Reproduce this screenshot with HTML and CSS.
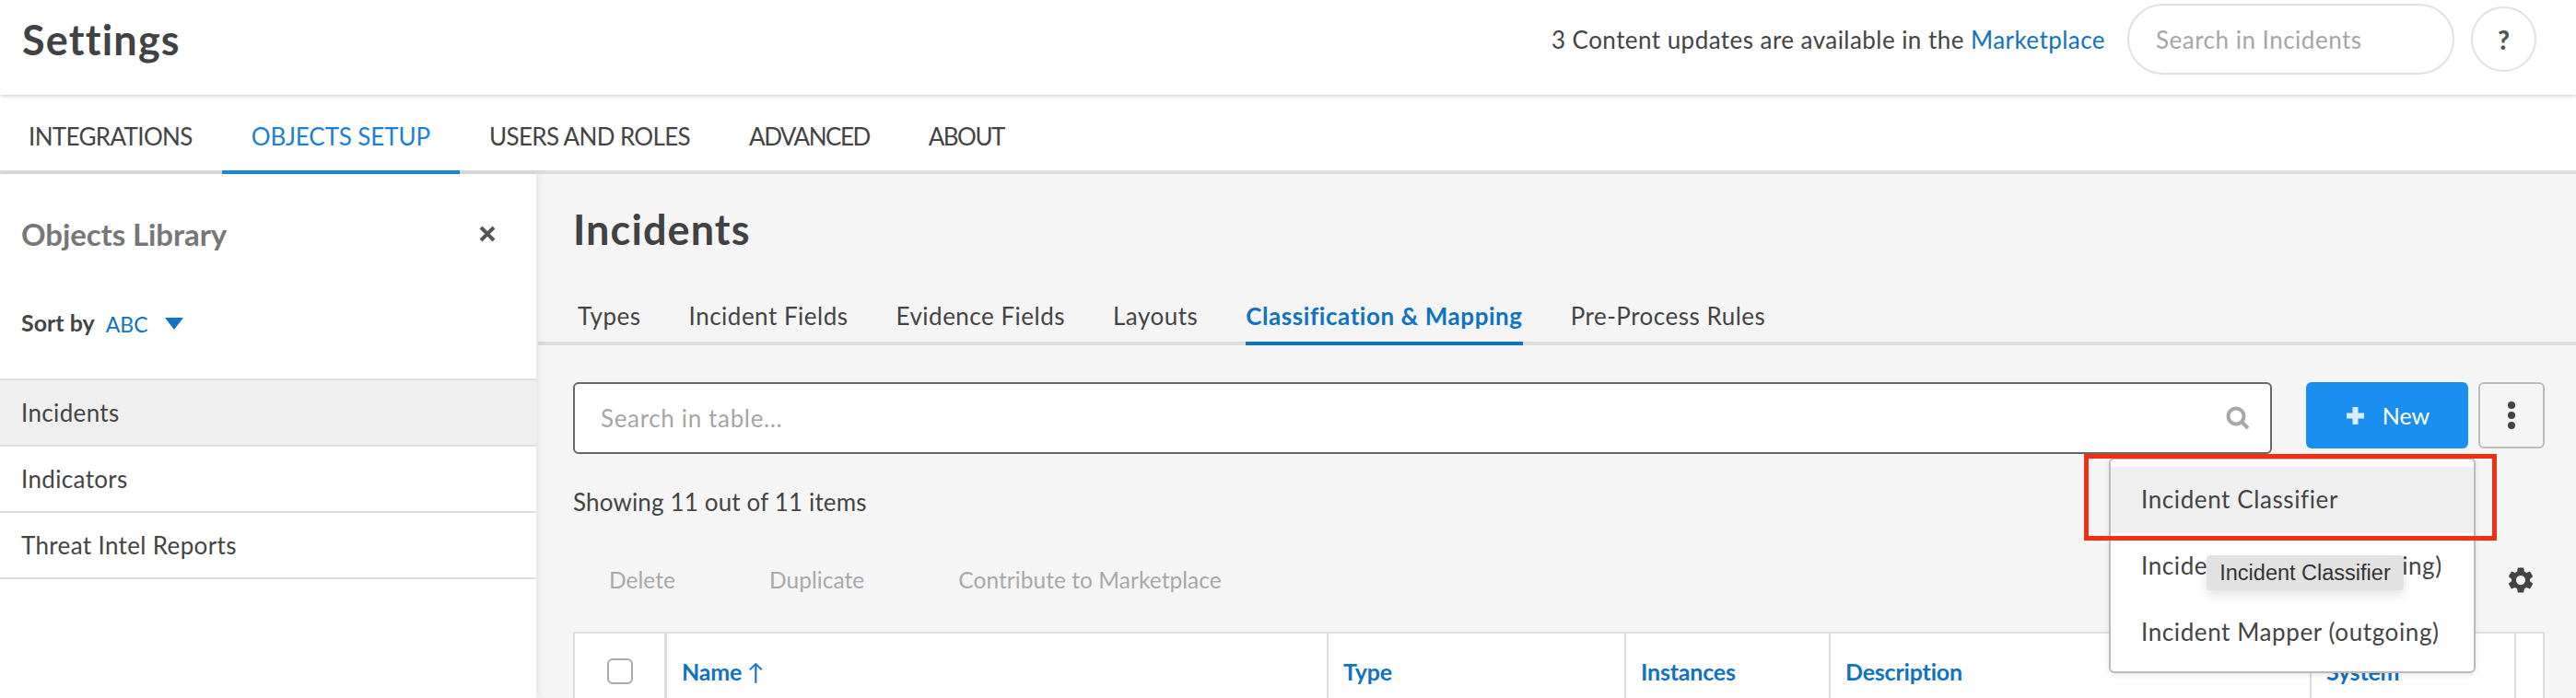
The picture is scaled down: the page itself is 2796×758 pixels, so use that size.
FILE: index.html
```html
<!DOCTYPE html>
<html lang="en">
<head>
<meta charset="utf-8">
<title>Settings</title>
<link rel="stylesheet" href="styles.css">
</head>
<body>
<div class="app">
  <header class="topbar">
    <h1 class="page-title">Settings</h1>
    <div class="updates">3 Content updates are available in the <a class="link">Marketplace</a></div>
    <div class="pill-search">Search in Incidents</div>
    <div class="help">?</div>
  </header>
  <nav class="navtabs">
    <div class="navtab">INTEGRATIONS</div>
    <div class="navtab navtab-active">OBJECTS SETUP</div>
    <div class="navtab">USERS AND ROLES</div>
    <div class="navtab navtab-tight">ADVANCED</div>
    <div class="navtab navtab-tight">ABOUT</div>
  </nav>
  <div class="content">
    <aside class="sidebar">
      <div class="side-head">
        <div class="side-title">Objects Library</div>
        <svg class="side-close" viewBox="0 0 18 18"><path d="M2 2 16 16M16 2 2 16"/></svg>
      </div>
      <div class="sort">
        <span class="sort-label">Sort by</span>
        <span class="sort-value">ABC</span>
        <svg class="sort-caret" viewBox="0 0 20 13"><path d="M0 0H20L10 13Z"/></svg>
      </div>
      <ul class="side-list">
        <li class="side-item side-item-active">Incidents</li>
        <li class="side-item">Indicators</li>
        <li class="side-item">Threat Intel Reports</li>
      </ul>
    </aside>
    <main class="main">
      <h2 class="main-title">Incidents</h2>
      <div class="subtabs">
        <div class="subtab">Types</div>
        <div class="subtab">Incident Fields</div>
        <div class="subtab">Evidence Fields</div>
        <div class="subtab">Layouts</div>
        <div class="subtab subtab-active">Classification &amp; Mapping</div>
        <div class="subtab">Pre-Process Rules</div>
      </div>
      <div class="toolbar">
        <div class="table-search">
          <span class="table-search-text">Search in table...</span>
          <svg class="search-icon" viewBox="0 0 26 26"><circle cx="11" cy="11" r="8.5"/><path d="M17.5 17.5 24 24"/></svg>
        </div>
        <div class="btn-new">
          <svg class="plus-icon" viewBox="0 0 23 23"><path d="M11.5 2V21M2 11.5H21"/></svg>
          <span>New</span>
        </div>
        <div class="btn-more"><i class="dot"></i><i class="dot"></i><i class="dot"></i></div>
      </div>
      <div class="count">Showing 11 out of 11 items</div>
      <div class="actions">
        <span class="action">Delete</span>
        <span class="action">Duplicate</span>
        <span class="action">Contribute to Marketplace</span>
        <svg class="gear" viewBox="2.2 2 19.6 20"><path d="M19.14 12.94c.04-.3.06-.61.06-.94 0-.32-.02-.64-.07-.94l2.03-1.58a.49.49 0 0 0 .12-.61l-1.92-3.32a.488.488 0 0 0-.59-.22l-2.39.96c-.5-.38-1.03-.7-1.62-.94l-.36-2.54a.484.484 0 0 0-.48-.41h-3.84c-.24 0-.43.17-.47.41l-.36 2.54c-.59.24-1.13.57-1.62.94l-2.39-.96c-.22-.08-.47 0-.59.22L2.74 8.87c-.12.21-.08.47.12.61l2.03 1.58c-.05.3-.09.63-.09.94s.02.64.07.94l-2.03 1.58a.49.49 0 0 0-.12.61l1.92 3.32c.12.22.37.29.59.22l2.39-.96c.5.38 1.03.7 1.62.94l.36 2.54c.05.24.24.41.48.41h3.84c.24 0 .44-.17.47-.41l.36-2.54c.59-.24 1.13-.56 1.62-.94l2.39.96c.22.08.47 0 .59-.22l1.92-3.32c.12-.22.07-.47-.12-.61l-2.01-1.58zM12 15.6c-1.98 0-3.6-1.62-3.6-3.6s1.62-3.6 3.6-3.6 3.6 1.62 3.6 3.6-1.62 3.6-3.6 3.6z"/></svg>
      </div>
      <div class="table">
        <div class="th th-check"><span class="checkbox"></span></div>
        <div class="th">Name <span class="arrow">↑</span></div>
        <div class="th">Type</div>
        <div class="th">Instances</div>
        <div class="th">Description</div>
        <div class="th">System</div>
        <div class="th"></div>
      </div>
    </main>
  </div>
  <div class="menu">
    <div class="menu-item menu-item-hover">Incident Classifier</div>
    <div class="menu-item">Incident Mapper (incoming)</div>
    <div class="menu-item">Incident Mapper (outgoing)</div>
  </div>
  <div class="tooltip">Incident Classifier</div>
  <div class="annotation"></div>
</div>
</body>
</html>
```
FILE: styles.css
```css
* { box-sizing: border-box; }
html, body { margin: 0; padding: 0; background: #fff; }
body { font-family: "Lato", "Noto Sans", sans-serif; color: #444; }
.app { position: relative; width: 2796px; height: 758px; overflow: hidden; display: flex; flex-direction: column; }

.topbar { height: 103px; flex: none; display: flex; align-items: center; padding: 0 43px 18px 24px; background: #fff; box-shadow: 0 1px 4px rgba(0,0,0,.22); position: relative; z-index: 2; }
.page-title { flex: 1; margin: 0; font-size: 45px; font-weight: 700; color: #404243; letter-spacing: 1.2px; }
.updates { font-size: 26px; color: #444; margin-right: 24px; letter-spacing: .45px; }
.link { color: #0f72c2; }
.pill-search { width: 355px; height: 77px; border: 2px solid #e0e0e0; border-radius: 39px; padding-left: 29px; display: flex; align-items: center; font-size: 26px; color: #a6a6a6; letter-spacing: .5px; }
.help { width: 71px; height: 71px; margin-left: 18px; border: 2px solid #e0e0e0; border-radius: 50%; display: flex; align-items: center; justify-content: center; font-size: 28px; font-weight: 900; color: #555; }

.navtabs { height: 86px; flex: none; display: flex; padding-top: 3px; border-bottom: 4px solid #dcdcdc; background: #fff; }
.navtab { padding: 0 32px; height: 83px; display: flex; align-items: center; font-size: 26px; color: #444; letter-spacing: -.65px; }
.navtab:first-child { margin-left: -1px; }
.navtab-tight { letter-spacing: -1.5px; }
.navtab-active { color: #1a80d4; border-bottom: 4px solid #1c88dc; padding-top: 4px; letter-spacing: -.1px; }

.content { flex: 1; display: flex; min-height: 0; }
.sidebar { width: 582px; flex: none; background: #fff; box-shadow: 3px 0 8px rgba(0,0,0,.07); position: relative; }
.side-head { display: flex; align-items: center; justify-content: space-between; padding: 45px 44px 0 23px; }
.side-title { font-size: 33px; font-weight: 700; color: #777; line-height: 40px; letter-spacing: -.1px; }
.side-close { width: 18px; height: 18px; fill: none; stroke: #555; stroke-width: 4; }
.sort { display: flex; align-items: center; padding: 60px 0 0 23px; height: 92px; }
.sort-label { font-size: 25px; font-weight: 700; color: #444; }
.sort-value { font-size: 23px; color: #0f72c2; margin-left: 12px; padding-top: 4px; }
.sort-caret { width: 20px; height: 13px; margin: 2px 0 0 18px; fill: #0f72c2; }
.side-list { list-style: none; margin: 45px 0 0; padding: 0; border-top: 2px solid #ddd; }
.side-item { height: 72px; border-bottom: 2px solid #ddd; padding-left: 23px; display: flex; align-items: center; font-size: 26px; color: #444; letter-spacing: .35px; }
.side-item-active { background: #efefef; }

.main { flex: 1; min-width: 0; background: #f5f5f5; display: flex; flex-direction: column; }
.main-title { margin: 0; padding: 34px 0 0 40px; font-size: 45px; font-weight: 700; color: #404243; line-height: 52px; letter-spacing: 1.1px; }
.subtabs { display: flex; gap: 52px; height: 100px; margin-left: 2px; padding-left: 43px; border-bottom: 4px solid #dcdcdc; }
.subtab { display: flex; align-items: flex-end; padding-bottom: 16px; font-size: 26px; color: #444; height: 100px; letter-spacing: .5px; }
.subtab-active { color: #0f72c2; font-weight: 700; border-bottom: 4px solid #0f72c2; padding-bottom: 12px; letter-spacing: .55px; }

.toolbar { display: flex; align-items: flex-start; margin-top: 40px; padding: 0 34px 0 40px; }
.table-search { flex: 1; height: 78px; border: 2px solid #666; border-radius: 6px; background: #fff; display: flex; align-items: center; justify-content: space-between; padding: 0 22px 0 28px; }
.table-search-text { font-size: 26px; color: #a6a6a6; letter-spacing: .65px; }
.search-icon { width: 26px; height: 26px; fill: none; stroke: #a8a8a8; stroke-width: 4; }
.btn-new { width: 176px; height: 72px; margin-left: 37px; border-radius: 6px; background: #1a8ff0; color: #fff; display: flex; align-items: center; justify-content: center; gap: 18px; font-size: 25px; }
.plus-icon { width: 23px; height: 23px; fill: none; stroke: #d8eefe; stroke-width: 6; }
.btn-more { width: 72px; height: 72px; margin-left: 11px; border: 2px solid #bdbdbd; border-radius: 6px; display: flex; flex-direction: column; align-items: center; justify-content: center; gap: 3px; }
.dot { width: 8px; height: 8px; border-radius: 50%; background: #444; }

.count { padding: 32px 0 0 40px; font-size: 26px; line-height: 40px; color: #444; letter-spacing: .15px; }
.actions { display: flex; align-items: center; height: 40px; margin-top: 50px; padding: 0 46px 0 79px; gap: 102px; }
.action { font-size: 24.5px; color: #a8a8a8; letter-spacing: .05px; }
.gear { width: 28px; height: 28px; margin-left: auto; fill: #444; }

.table { display: grid; grid-template-columns: 100px 718px 323px 222px 522px 222px 33px; margin: 42px 34px 0 40px; background: #fff; border-top: 2px solid #ddd; border-right: 2px solid #ddd; height: 100px; }
.th { border-left: 2px solid #ddd; padding: 21px 0 0 16px; font-size: 25px; font-weight: 700; color: #0f72c2; line-height: 40px; letter-spacing: -.2px; }
.th-check { padding: 0; display: flex; justify-content: center; border-right: 1px solid #ddd; }
.checkbox { width: 28px; height: 28px; margin-top: 27px; border: 2px solid #aaa; border-radius: 6px; background: #fff; }
.arrow { font-weight: 400; }

.menu { position: absolute; left: 2289px; top: 497px; width: 398px; height: 234px; padding-top: 8px; background: #fff; border: 2px solid #bbb; border-radius: 6px; box-shadow: 0 2px 6px rgba(0,0,0,.1); }
.menu-item { height: 72px; padding: 0 0 2px 33px; display: flex; align-items: center; font-size: 26px; color: #444; letter-spacing: .6px; }
.menu-item-hover { background: #efefef; }
.tooltip { position: absolute; left: 2395px; top: 603px; width: 214px; height: 38px; background: #e2e2e2; border-radius: 4px; box-shadow: 0 5px 12px rgba(0,0,0,.12); display: flex; align-items: center; justify-content: center; font-family: "Liberation Sans", sans-serif; font-size: 23.5px; color: #333; }
.annotation { position: absolute; left: 2262px; top: 493px; width: 448px; height: 94px; border: 5px solid #f03010; }
```
